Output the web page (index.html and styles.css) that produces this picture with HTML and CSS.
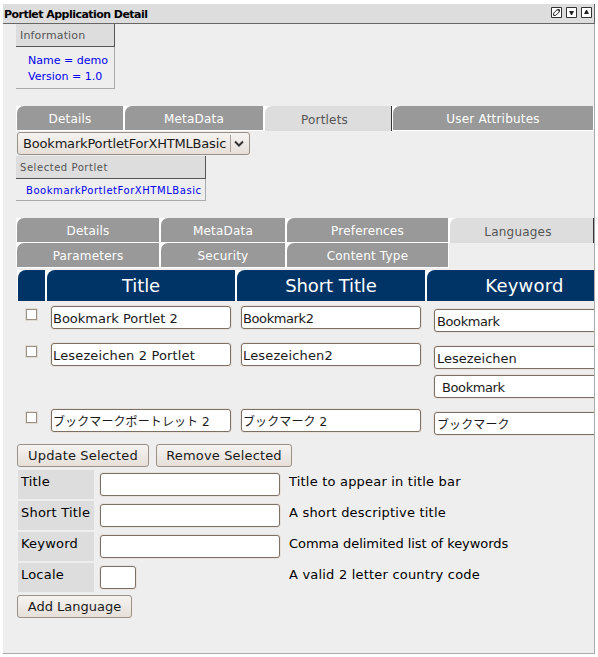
FILE: index.html
```html
<!DOCTYPE html>
<html lang="en">
<head>
<meta charset="utf-8">
<title>Portlet Application Detail</title>
<link rel="stylesheet" href="styles.css">
</head>
<body>
<main class="portlet">
  <header class="titlebar">
    <h1>Portlet Application Detail</h1>
    <div class="actions">
      <svg width="11" height="11" viewBox="0 0 11 11"><path class="frame" d="M.5.5h10v10H.5z"/><path d="M2.6 8.4V6.2L6.2 2.6 8.4 4.8 4.8 8.4z" fill="#fff" stroke="#222"/><path d="M6 2h2l1 1v2z" fill="#222"/></svg>
      <svg width="11" height="11" viewBox="0 0 11 11"><path class="frame" d="M.5.5h10v10H.5z"/><path d="M3 4h5L6 8H5z" fill="#222"/></svg>
      <svg width="11" height="11" viewBox="0 0 11 11"><path class="frame" d="M.5.5h10v10H.5z"/><path d="M3 7h5L6 3H5z" fill="#222"/></svg>
    </div>
  </header>
  <div class="content">
    <section class="box info">
      <h2>Information</h2>
      <div class="box-body"><p>Name = demo</p><p>Version = 1.0</p></div>
    </section>
    <nav class="tabs outer">
      <a class="tab"><span>Details</span></a>
      <a class="tab"><span>MetaData</span></a>
      <a class="tab active"><span>Portlets</span></a>
      <a class="tab"><span>User Attributes</span></a>
    </nav>
    <div class="select"><span>BookmarkPortletForXHTMLBasic</span><i><svg width="10" height="8" viewBox="0 0 10 8"><path d="M1 1.5 5 5.5 9 1.5" fill="none" stroke="#333" stroke-width="2"/></svg></i></div>
    <section class="box selected">
      <h2>Selected Portlet</h2>
      <div class="box-body"><p>BookmarkPortletForXHTMLBasic</p></div>
    </section>
    <nav class="tabs inner">
      <a class="tab"><span>Details</span></a>
      <a class="tab"><span>MetaData</span></a>
      <a class="tab"><span>Preferences</span></a>
      <a class="tab active"><span>Languages</span></a>
      <a class="tab"><span>Parameters</span></a>
      <a class="tab"><span>Security</span></a>
      <a class="tab"><span>Content Type</span></a>
    </nav>
    <div class="grid head">
      <div class="th"><span></span></div>
      <div class="th"><span>Title</span></div>
      <div class="th"><span>Short Title</span></div>
      <div class="th"><span class="h-key">Keyword</span></div>
    </div>
    <div class="grid row">
      <div class="check"></div>
      <div class="field"><b>Bookmark Portlet 2</b></div>
      <div class="field"><b class="narrow">Bookmark2</b></div>
      <div class="keys"><div class="field"><b class="narrow">Bookmark</b></div></div>
    </div>
    <div class="grid row tall">
      <div class="check"></div>
      <div class="field"><b class="wide">Lesezeichen 2 Portlet</b></div>
      <div class="field"><b class="wide">Lesezeichen2</b></div>
      <div class="keys"><div class="field"><b>Lesezeichen</b></div><div class="field indent"><b class="narrow">Bookmark</b></div></div>
    </div>
    <div class="grid row last">
      <div class="check"></div>
      <div class="field"><b class="ja">ブックマークポートレット 2</b></div>
      <div class="field"><b class="ja">ブックマーク 2</b></div>
      <div class="keys"><div class="field"><b class="ja">ブックマーク</b></div></div>
    </div>
    <div class="buttons"><div class="button update"><span>Update Selected</span></div><div class="button remove"><span>Remove Selected</span></div></div>
    <div class="form">
      <div class="label">Title</div><div class="field"></div><p>Title to appear in title bar</p>
      <div class="label">Short Title</div><div class="field"></div><p>A short descriptive title</p>
      <div class="label">Keyword</div><div class="field"></div><p class="tight">Comma delimited list of keywords</p>
      <div class="label">Locale</div><div class="field code"></div><p>A valid 2 letter country code</p>
    </div>
    <div class="button add"><span>Add Language</span></div>
  </div>
</main>
</body>
</html>
```
FILE: styles.css
```css
* { box-sizing: border-box; }
body { margin: 0; background: #fff; font: 13px/16px "DejaVu Sans", sans-serif; color: #000; overflow: hidden; }
h1, h2, p { margin: 0; font-weight: normal; }
svg { display: block; }

.portlet { margin: 4px 0 0 3px; width: 592px; height: 650px; background: #eee; border-bottom: 1px solid #aaa; overflow: hidden; }
.titlebar { height: 20px; display: flex; justify-content: space-between; background: #ddd; border-right: 1px solid #666; border-bottom: 1px solid #666; padding: 3px 2px 0 1px; }
.titlebar h1 { font-size: 11px; line-height: 15px; font-weight: bold; letter-spacing: -0.54px; white-space: nowrap; }
.actions { display: flex; gap: 4px; }
.frame { fill: #fff; stroke: #333; }
.content { height: 629px; padding-left: 13px; border-right: 1px solid #aaa; overflow: hidden; }

.box { font-size: 11px; }
.box h2 { height: 23px; padding: 4px 0 0 4px; font-size: 11px; line-height: 15px; letter-spacing: 0.15px; color: #555; background: #ddd; border-right: 1px solid #555; border-bottom: 1px solid #555; }
.box-body { color: #00e; border-right: 1px solid #aaa; border-bottom: 1px solid #aaa; white-space: nowrap; }
.info { width: 99px; }
.info .box-body { height: 42px; padding: 6px 0 0 12px; }
.selected { width: 190px; margin-top: 1px; }
.selected h2 { font-size: 10px; letter-spacing: 0.55px; }
.selected .box-body { height: 22px; padding: 4px 0 0 10px; font-size: 10px; letter-spacing: 0.55px; }

.tabs { display: grid; }
.outer { margin-top: 17px; grid-template-columns: 108px 140px 128px 202px; }
.inner { margin-top: 17px; grid-template-columns: 144px 126px 163px 145px; }
.tab { height: 25px; padding: 0 1px 1px; background: #fff; color: #fff; text-align: center; font-size: 12px; letter-spacing: 0.2px; }
.tab span { display: block; height: 24px; padding-top: 5px; background: #999; border-top-left-radius: 7px; }
.tab.active { padding: 0 0 0 1px; color: #555; background: linear-gradient(90deg, #fff 10px, #ddd 10px); }
.tab.active span { height: 25px; padding: 6px 7px 0 0; background: #ddd; border-right: 1px solid #333; }

.select { margin: 1px 0 0 1px; width: 233px; height: 23px; display: flex; border: 1px solid #9a9086; border-radius: 3px; background: linear-gradient(#f5f3f1, #e6dfd9); padding-left: 5px; }
.select span { width: 207px; line-height: 21px; letter-spacing: -0.18px; white-space: nowrap; color: #1a1a1a; }
.select i { margin: 2px 0; padding: 5px 0 0 3px; border-left: 1px solid #aaa198; }

.grid { display: grid; grid-template-columns: 29px 190px 190px 190px; width: 599px; padding-left: 1px; }
.head { margin-top: 2px; height: 31px; color: #fff; font-size: 18px; letter-spacing: -0.1px; text-align: center; }
.th { background: #fff; padding-left: 1px; padding-right: 1px; }
.th:last-child { padding-right: 0; }
.th span { display: block; height: 31px; line-height: 32px; background: #036; border-top-left-radius: 8px; }
.th .h-key { padding-left: 6px; letter-spacing: 0.2px; }
.row { height: 37px; padding-top: 5px; align-items: start; }
.row.tall { height: 66px; }
.row.last { height: 37px; }
.check { width: 11px; height: 11px; margin: 3px 0 0 9px; border: 1px solid #9a9086; background: #fff; box-shadow: 0 0 0 1px #e2dcd6; }
.field { width: 180px; height: 23px; margin-left: 5px; border: 1px solid #7c7065; border-radius: 3px; background: #fff; box-shadow: 0 0 0 1px #e8e2de; color: #1a1a1a; }
.field b { display: block; padding: 4px 0 0 1px; font-weight: normal; line-height: 16px; white-space: pre; }
.field .narrow { letter-spacing: -0.4px; }
.field .wide { letter-spacing: 0.15px; }
.keys { display: grid; gap: 6px; padding: 3px 0 0 8px; }
.keys .field { margin-left: 0; }
.keys .field b { padding-left: 2px; }
.keys .indent b { padding-left: 7px; }
.field .ja { font-family: "DejaVu Sans", "Noto Sans CJK JP", sans-serif; font-size: 12px; letter-spacing: 0.1px; }

.buttons { display: flex; gap: 7px; margin: 3px 0 3px 1px; letter-spacing: 0.15px; }
.button { height: 23px; display: grid; place-items: center; padding-top: 1px; border: 1px solid #9a9086; border-radius: 3px; background: linear-gradient(#f5f3f1, #e6dfd9); color: #1a1a1a; }
.update { width: 132px; }
.remove { width: 136px; }
.add { width: 115px; margin: 3px 0 0 1px; }

.form { display: grid; grid-template-columns: 76px 195px 1fr; grid-auto-rows: 29px; row-gap: 2px; padding-left: 2px; letter-spacing: 0.2px; }
.label { background: #ddd; padding: 4px 0 0 3px; white-space: nowrap; }
.form .field { margin: 3px 0 0 6px; }
.form .code { width: 36px; }
.form p { padding-top: 4px; white-space: nowrap; }
.form .tight { letter-spacing: -0.06px; }
```
